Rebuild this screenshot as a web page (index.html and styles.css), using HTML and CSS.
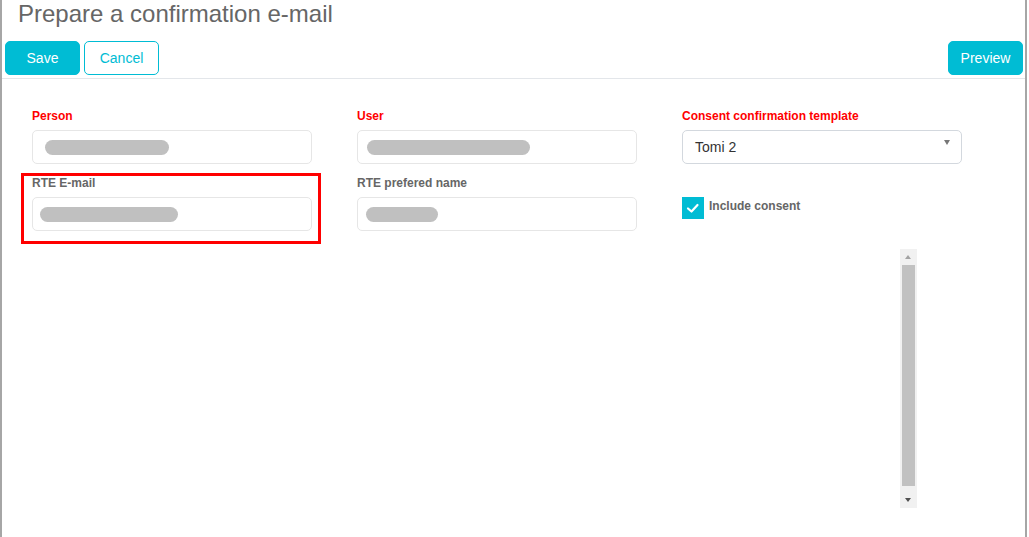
FILE: index.html
```html
<!DOCTYPE html>
<html lang="en">
<head>
<meta charset="utf-8">
<title>Prepare a confirmation e-mail</title>
<link rel="stylesheet" href="styles.css">
</head>
<body>
<div class="window">
  <header class="header">
    <h1 class="title">Prepare a confirmation e-mail</h1>
    <div class="toolbar">
      <div class="toolbar-left">
        <button class="btn btn-primary">Save</button>
        <button class="btn btn-outline">Cancel</button>
      </div>
      <button class="btn btn-primary">Preview</button>
    </div>
  </header>
  <main class="form">
    <div class="field">
      <label class="label label-required">Person</label>
      <div class="input input-person"><span class="blob blob-person"></span></div>
    </div>
    <div class="field">
      <label class="label label-required">User</label>
      <div class="input input-user"><span class="blob blob-user"></span></div>
    </div>
    <div class="field">
      <label class="label label-required">Consent confirmation template</label>
      <div class="select">
        <span class="select-value">Tomi 2</span>
        <span class="select-arrow"></span>
      </div>
    </div>
    <div class="field field-highlight">
      <label class="label">RTE E-mail</label>
      <div class="input input-email"><span class="blob blob-email"></span></div>
      <div class="highlight"></div>
    </div>
    <div class="field">
      <label class="label">RTE prefered name</label>
      <div class="input input-name"><span class="blob blob-name"></span></div>
    </div>
    <div class="field">
      <div class="label-spacer"></div>
      <div class="checkbox-row">
        <span class="checkbox">
          <svg width="22" height="22" viewBox="0 0 22 22"><polyline points="6,11.5 9.5,14.5 15.5,8" fill="none" stroke="#fff" stroke-width="2.2" stroke-linecap="round" stroke-linejoin="round"/></svg>
        </span>
        <span class="checkbox-label">Include consent</span>
      </div>
      <div class="preview-box">
        <div class="scrollbar">
          <div class="sb-arrow sb-up"></div>
          <div class="sb-track"><div class="sb-thumb"></div></div>
          <div class="sb-arrow sb-down"></div>
        </div>
      </div>
    </div>
  </main>
</div>
</body>
</html>
```
FILE: styles.css
```css
* { box-sizing: border-box; }
html, body { margin: 0; padding: 0; background: #fff; }
body { font-family: "Liberation Sans", Arial, sans-serif; }

.window {
  width: 1027px;
  height: 537px;
  border-left: 2px solid #a6a6a6;
  border-right: 2px solid #a6a6a6;
  overflow: hidden;
}

.header {
  border-bottom: 1px solid #e3e6ea;
  padding: 0 2px 3px 3px;
}

.title {
  margin: 0;
  padding-left: 13px;
  font-size: 24px;
  line-height: 28px;
  font-weight: normal;
  color: #666;
  height: 28px;
}

.toolbar {
  margin-top: 13px;
  display: flex;
  justify-content: space-between;
  align-items: center;
}
.toolbar-left { display: flex; gap: 4px; }

.btn {
  width: 75px;
  height: 34px;
  border-radius: 5px;
  font-family: "Liberation Sans", Arial, sans-serif;
  font-size: 14px;
  padding: 0;
  cursor: pointer;
}
.btn-primary {
  background: #00bcd4;
  border: 1px solid #00bcd4;
  color: #fff;
}
.btn-outline {
  background: #fff;
  border: 1px solid #00bcd4;
  color: #00bcd4;
}

.form {
  padding: 29px 0 0 30px;
  display: grid;
  grid-template-columns: 280px 280px 280px;
  column-gap: 45px;
  row-gap: 11px;
  align-items: start;
}

.field { position: relative; }

.label {
  display: block;
  font-size: 12px;
  line-height: 15px;
  padding-top: 1px;
  font-weight: bold;
  color: #666;
  margin-bottom: 6px;
}
.label-required { color: #f00; }
.label-spacer { height: 22px; }

.input, .select {
  height: 34px;
  border: 1px solid #e6e6e6;
  border-radius: 5px;
  display: flex;
  align-items: center;
  background: #fff;
}

.blob {
  display: block;
  height: 15px;
  border-radius: 8px;
  background: #c0c0c0;
}
.input-person { padding-left: 12px; }
.blob-person { width: 124px; }
.input-user { padding-left: 9px; }
.blob-user { width: 163px; }
.input-email { padding-left: 7px; }
.blob-email { width: 138px; }
.input-name { padding-left: 8px; }
.blob-name { width: 72px; }

.select {
  position: relative;
  border-color: #d3d8de;
  padding-left: 12px;
}
.select-value {
  font-size: 14px;
  color: #333;
}
.select-arrow {
  position: absolute;
  right: 11px;
  top: 9px;
  width: 0;
  height: 0;
  border-left: 3.5px solid transparent;
  border-right: 3.5px solid transparent;
  border-top: 5px solid #777;
}

.highlight {
  position: absolute;
  left: -11px;
  top: -2px;
  width: 300px;
  height: 71px;
  border: 3px solid #f00;
}

.checkbox-row {
  display: flex;
  align-items: flex-start;
  gap: 5px;
}
.checkbox {
  width: 22px;
  height: 22px;
  background: #00bcd4;
  display: block;
}
.checkbox svg { display: block; }
.checkbox-label {
  font-size: 12px;
  line-height: 15px;
  font-weight: bold;
  color: #666;
  padding-top: 2px;
}

.preview-box {
  margin-top: 30px;
  height: 259px;
  padding-left: 218px;
}
.scrollbar {
  width: 17px;
  height: 259px;
  background: #f1f1f1;
  display: flex;
  flex-direction: column;
  align-items: center;
}
.sb-arrow {
  height: 16px;
  width: 17px;
  position: relative;
}
.sb-arrow::after {
  content: "";
  position: absolute;
  left: 5px;
  width: 0;
  height: 0;
  border-left: 3.5px solid transparent;
  border-right: 3.5px solid transparent;
}
.sb-up::after { top: 6px; border-bottom: 4px solid #a3a3a3; }
.sb-down::after { top: 6px; border-top: 4px solid #505050; }
.sb-track {
  flex: 1;
  width: 17px;
  display: flex;
  justify-content: center;
}
.sb-thumb {
  width: 13px;
  height: 221px;
  background: #c1c1c1;
}
```
